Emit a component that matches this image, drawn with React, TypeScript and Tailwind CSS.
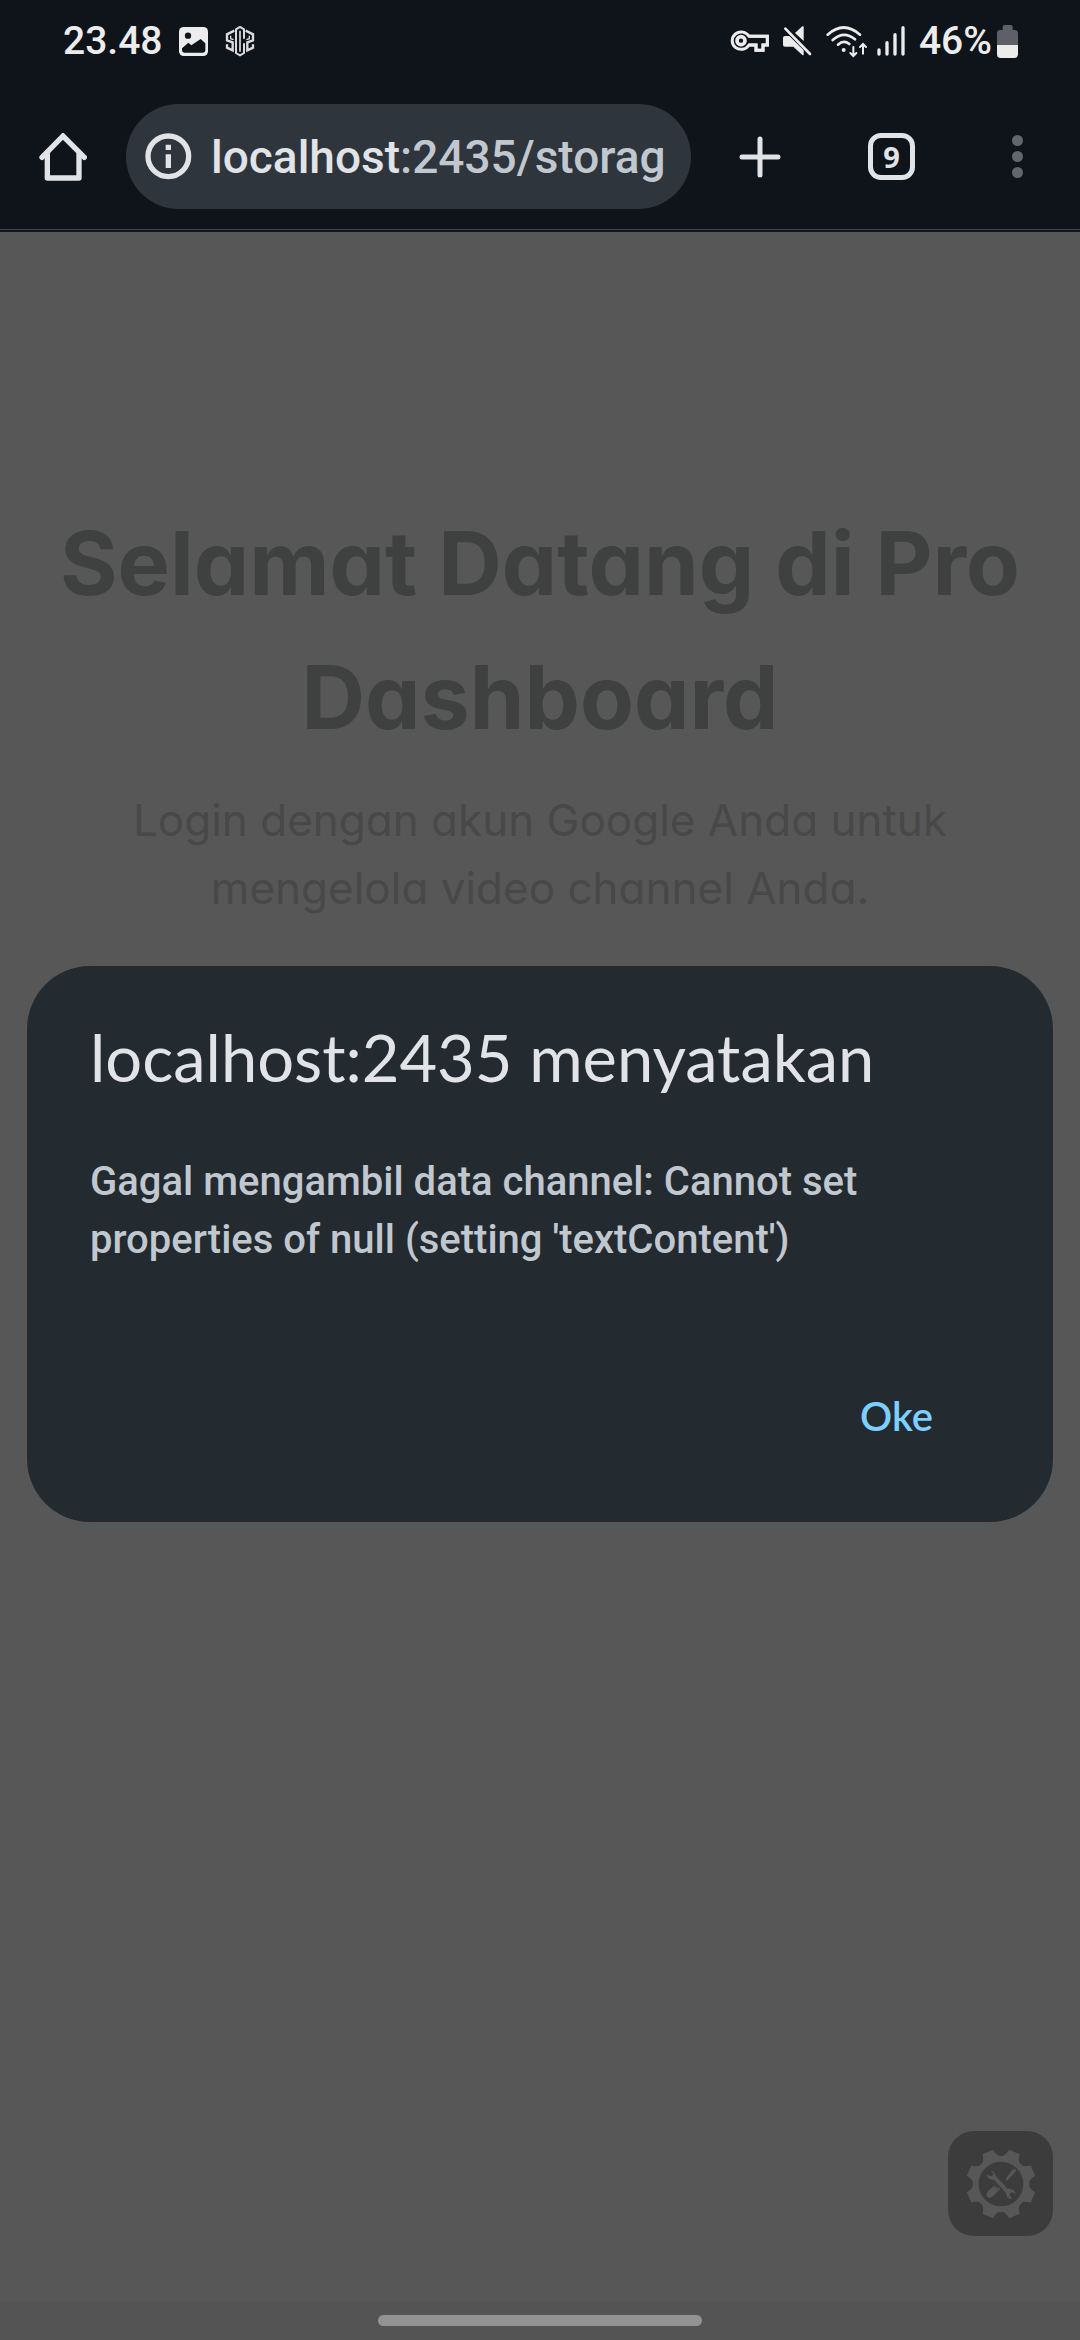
function PictureIcon() {
  return (
    <svg className="h-[29px] w-[29px]" viewBox="0 0 87 87" aria-hidden="true">
      <rect width="87" height="87" rx="14" fill="#ececec" />
      <circle cx="27" cy="26" r="9.500" fill="#0f141b" />
      <path d="M9 64 L28 47 L37 55 L65 36 L79 49 V70 Q79 77 72 77 H16 Q9 77 9 70Z" fill="#0f141b" />
    </svg>
  );
}

function HexLogoIcon() {
  return (
    <svg className="h-[32px] w-[30px]" viewBox="556 45 90 96" fill="none" stroke="#dcdcdc" strokeWidth="7" aria-hidden="true">
      <path d="M584 62 L562 73 V91 L579 97 V121 L562 113 V103" />
      <path d="M573 77 V86 L582 89" strokeWidth="4" />
      <path d="M613 86 V58 L601 51 L589 58 V129 L601 136 L613 129 V100" strokeWidth="6" />
      <path d="M601 62 V125" strokeWidth="5" />
      <path d="M618 62 L640 73 V91 L623 97 V121 L640 113 V103" />
      <path d="M629 77 V86 L620 89" strokeWidth="4" />
    </svg>
  );
}

function KeyIcon() {
  return (
    <svg className="h-[24px] w-[39px]" viewBox="84 60 117 72" fill="none" stroke="#ececec" strokeWidth="9" aria-hidden="true">
      <path d="M141 82 A27 26 0 1 0 141 108 H162 V124 H183 V108 H196 V82Z" />
      <path d="M126 95 H190" strokeWidth="5" stroke="#0f141b" />
      <circle cx="117" cy="95" r="12" strokeWidth="11" />
      <path d="M141 82 H196 V108 H183 V124 H162 V108 H141" />
    </svg>
  );
}

function MutedIcon() {
  return (
    <svg className="h-[32px] w-[30px]" viewBox="242 46 90 96" fill="#ececec" aria-hidden="true">
      <path d="M281 70 L303 50 Q307 48 307 53 V94Z" />
      <path d="M251 79 H264 L307 122 V134 Q307 139 303 136 L276 111 H251 Q245 111 245 105 V85 Q245 79 251 79Z" />
      <path d="M252 57 L326 133" fill="none" stroke="#ececec" strokeWidth="8" strokeLinecap="round" />
    </svg>
  );
}

function WifiIcon() {
  return (
    <svg className="h-[33px] w-[42px]" viewBox="372 44 126 99" fill="none" stroke="#ececec" strokeWidth="8" strokeLinecap="round" aria-hidden="true">
      <path d="M377 73 Q425 30 474 73" />
      <path d="M392 89 Q425 59 459 87" />
      <path d="M408 103 Q425 88 442 101" />
      <circle cx="425" cy="119" r="6" fill="#ececec" stroke="none" />
      <path d="M454 110 V136 M445 128 L454 137 L463 128" strokeWidth="6" />
      <path d="M483 130 V102 M474 110 L483 101 L492 110" strokeWidth="6" />
    </svg>
  );
}

function SignalIcon() {
  return (
    <svg className="h-[30px] w-[28px]" viewBox="525 50 84 90" stroke="#ececec" strokeWidth="10" strokeLinecap="round" aria-hidden="true">
      <path d="M531 122 V134 M555 100 V134 M579 76 V134 M603 55 V134" />
    </svg>
  );
}

function BatteryIcon() {
  return (
    <svg className="h-[33px] w-[21px]" viewBox="888 45 63 99" aria-hidden="true">
      <path d="M888 70 Q888 60 898 60 H905 V51 Q905 45 911 45 H929 Q935 45 935 51 V60 H941 Q951 60 951 70 V106 H888Z" fill="#5d6167" />
      <path d="M888 105 H951 V133 Q951 144 940 144 H899 Q888 144 888 133Z" fill="#ececec" />
    </svg>
  );
}

function StatusBar() {
  return (
    <div className="flex h-[80px] items-center pt-[2px] pr-[62px] pl-[63px] text-[39px] font-medium text-[#ececec]">
      <time>23.48</time>
      <div className="ml-[16px] flex items-center gap-[17px]">
        <PictureIcon />
        <HexLogoIcon />
      </div>
      <div className="ml-auto flex items-center">
        <KeyIcon />
        <span className="ml-[13px]"><MutedIcon /></span>
        <span className="ml-[14px]"><WifiIcon /></span>
        <span className="ml-[9px]"><SignalIcon /></span>
        <span className="ml-[14px]">46%</span>
        <span className="ml-[5px]"><BatteryIcon /></span>
      </div>
    </div>
  );
}

function Toolbar() {
  return (
    <div className="flex h-[149px] items-start pt-[24px] text-[#e1e3e6]">
      <button type="button" aria-label="Beranda" className="flex h-[105px] w-[126px] items-center justify-center">
        <svg className="h-[48px] w-[48px]" viewBox="118 127 144 144" fill="none" stroke="currentColor" strokeWidth="16" strokeLinecap="round" strokeLinejoin="round" aria-hidden="true">
          <path d="M127 200 L190 136 L254 200" strokeLinejoin="miter" />
          <path d="M143 186 V262 H238 V186" />
        </svg>
      </button>
      <div className="flex h-[105px] min-w-0 flex-1 items-center rounded-full bg-[#2f353c] pr-[22px] pl-[19px]">
        <button type="button" aria-label="Info situs" className="shrink-0">
          <svg className="h-[47px] w-[47px]" viewBox="0 0 141 141" fill="none" stroke="currentColor" aria-hidden="true">
            <circle cx="70" cy="70" r="61" strokeWidth="16" />
            <path d="M70 64 V105 M70 35 V51" strokeWidth="16" />
          </svg>
        </button>
        <div className="ml-[19px] flex-1 overflow-hidden text-[46px] leading-[60px] font-medium whitespace-nowrap text-[#c0c7cf]">
          <span className="text-[#e1e3e6]">localhost</span>:2435/storag
        </div>
      </div>
      <button type="button" aria-label="Tab baru" className="flex h-[105px] w-[137px] items-center justify-center">
        <svg className="h-[42px] w-[42px]" viewBox="0 0 42 42" stroke="currentColor" strokeWidth="5" strokeLinecap="round" aria-hidden="true">
          <path d="M21 3 V39 M3 21 H39" />
        </svg>
      </button>
      <button type="button" aria-label="9 tab terbuka" className="flex h-[105px] w-[127px] items-center justify-center">
        <span className="flex h-[47px] w-[47px] items-center justify-center rounded-[13px] border-[5px] border-current font-['Noto_Sans'] text-[29px] leading-none font-bold">9</span>
      </button>
      <button type="button" aria-label="Menu" className="flex h-[105px] w-[125px] items-center justify-center">
        <svg className="h-[43px] w-[11px]" viewBox="0 0 11 43" fill="#63666b" aria-hidden="true">
          <circle cx="5.500" cy="5.500" r="5.500" />
          <circle cx="5.500" cy="21.500" r="5.500" />
          <circle cx="5.500" cy="37.500" r="5.500" />
        </svg>
      </button>
    </div>
  );
}

const TEETH = [22.5, 67.5, 112.5, 157.5, 202.5, 247.5, 292.5, 337.5];

function ToolsIcon() {
  return (
    <svg className="h-[68px] w-[68px]" viewBox="-102 -102 204 204" fill="#575757" aria-hidden="true">
      <circle r="76" fill="none" stroke="#575757" strokeWidth="18" />
      {TEETH.map((angle) => (
        <path key={angle} transform={`rotate(${angle})`} d="M-31 -76 Q-19 -85 -17 -104 H17 Q19 -85 31 -76 L20 -70 H-20Z" />
      ))}
      <g>
        <path d="M14 -15 L34 -42 L44 -45 L44 -37 L17 -8Z" />
        <path d="M-20 4 L-41 24 Q-47 34 -39 40 Q-32 44 -24 37 L-2 14 L-7 9 L-13 17 L-12 5 L-19 12Z" />
        <path d="M-31 -40 L-22 -30 L-26 -25 L-34 -23 L-43 -30 Q-42 -18 -32 -14 Q-25 -12 -20 -12 L15 27 Q16 42 27 45 L34 43 L25 34 L28 27 L36 25 L44 32 Q43 20 32 16 L20 14 L-16 -24 Q-18 -38 -31 -40Z" />
      </g>
    </svg>
  );
}

export default function App() {
  return (
    <div className="relative flex min-h-screen flex-col bg-[#575757] font-[Roboto,sans-serif]">
      <header className="border-b-[2px] border-[#14191d] bg-[#0f141b]">
        <StatusBar />
        <Toolbar />
        <div className="h-px bg-[#3d4347]" />
      </header>

      <main className="flex flex-1 flex-col px-[42px] pt-[264px] text-center font-[Inter,sans-serif] [font-feature-settings:'cv11']">
        <h1 className="text-[88px] leading-[134px] font-bold text-[#3f4140]">Selamat Datang di Pro Dashboard</h1>
        <p className="mt-[22px] px-[63px] text-[44px] leading-[68px] text-[#484848]">
          Login dengan akun Google Anda untuk mengelola video channel Anda.
        </p>
        <button type="button" aria-label="Alat" className="mt-auto mr-[-15px] mb-[65px] flex h-[105px] w-[105px] items-center justify-center self-end rounded-[26px] bg-[#3c3c3c]">
          <ToolsIcon />
        </button>
      </main>

      <footer className="flex h-[39px] items-center justify-center bg-[#545455]">
        <div className="h-[11px] w-[30%] rounded-full bg-[#939393]" />
      </footer>

      <div className="absolute inset-0 flex items-center px-[27px] pt-[148px]">
        <section role="alertdialog" aria-modal="true" aria-labelledby="dialog-title" aria-describedby="dialog-text" className="flex w-full flex-col rounded-[63px] bg-[#232a30] px-[63px] pt-[51px] pb-[44px]">
          <h2 id="dialog-title" className="font-[Lato,sans-serif] text-[65px] leading-[80px] text-[#e1e3e6]">localhost:2435 menyatakan</h2>
          <p id="dialog-text" className="mt-[56px] text-[40px] leading-[58px] font-medium text-[#c0c7cf]">
            Gagal mengambil data channel: Cannot set properties of null (setting 'textContent')
          </p>
          <button type="button" className="mt-[84px] mr-[26px] h-[125px] self-end px-[31px] font-[Lato,sans-serif] text-[40px] font-semibold text-[#7bd0ff]">Oke</button>
        </section>
      </div>
    </div>
  );
}
